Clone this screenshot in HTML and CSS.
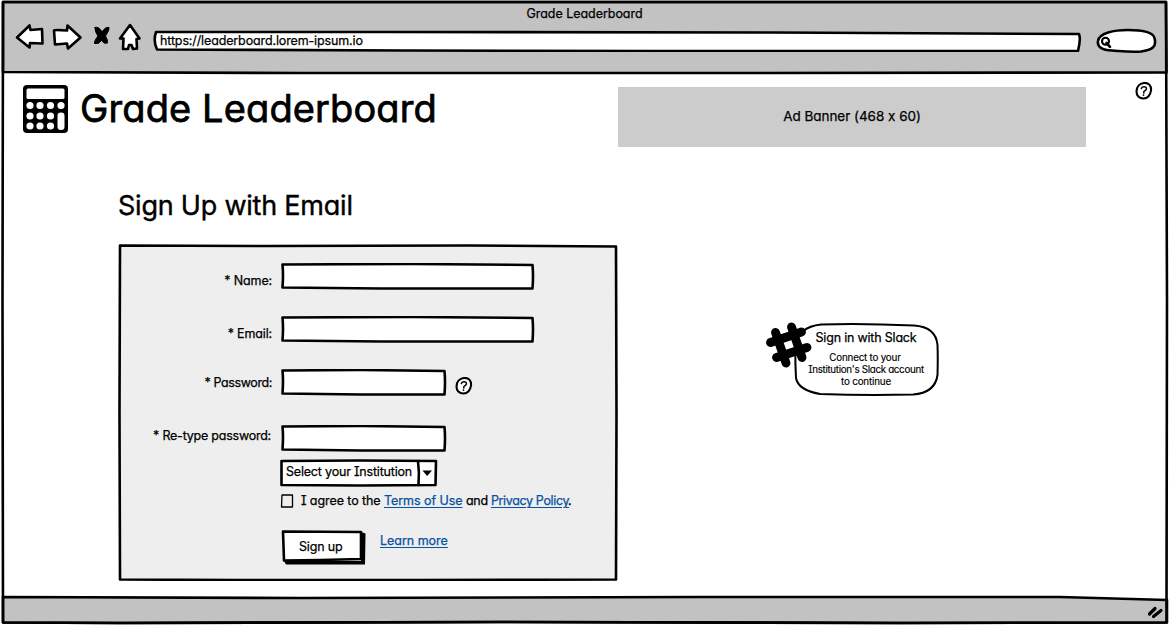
FILE: index.html
```html
<!DOCTYPE html>
<html lang="en">
<head>
<meta charset="utf-8">
<title>Grade Leaderboard</title>
<link rel="stylesheet" href="styles.css">
</head>
<body>
<div class="window">
  <svg class="frame ink" viewBox="0 0 1169 625">
    <path class="chrome" d="M3 2L1166 2L1166.500 72.500L700 73L300 73L3 72Z"/>
    <path class="chrome" d="M3 597L300 598L700 597L1060 597L1167 600L1167 622.500L900 623L500 622L120 623L3 622.500Z"/>
    <path d="M3 2L1166 2L1167 300L1166.500 622.500L900 623L500 622L120 623L3 622.500L2.500 300Z"/>
  </svg>

  <header class="header">
    <div class="titlebar"><span class="t-title">Grade Leaderboard</span></div>
    <div class="toolbar">
      <svg class="nav-icons ink" width="128" height="30" viewBox="15 22 128 30">
        <path class="paper" d="M17 37.500L29.500 25.500L30.500 30L42 29L42.500 43.500L30 43L29.500 47.500Z"/>
        <path class="paper" d="M54 30.500Q55 29.500 67 30.500L67.500 25.500L80.500 37.500L68 48.500L67 43.500L55 44.500Z"/>
        <path class="solid" d="M95 27.500Q99 26 102 32Q105.500 26.500 109 27.500Q109.500 30 105.500 36Q108 40 107.500 43Q104.500 44.500 101.500 40.500Q98 45 94.500 43.500Q94 41 98 36Q94.500 31.500 95 27.500Z"/>
        <path class="paper" d="M130 25L139.500 38.500L136.500 39L137 48.500L133 49L131.500 45L129 45L128 49L123 49L123.500 38.500L120 38.500Z"/>
      </svg>
      <div class="address">
        <svg class="sketch ink" viewBox="0 0 929 22">
          <path class="paper" d="M3 2L240 2L620 2.500L926 4Q928 9 925 21L500 21L250 20.500L4 19.500Q0 11 3 2Z"/>
        </svg>
        <span class="t-url">https://leaderboard.lorem-ipsum.io</span>
      </div>
      <svg class="search ink" width="62" height="28" viewBox="1096 27 62 28">
        <path class="paper" d="M1098 41C1099 33 1114 30 1128 30C1144 30 1153 32 1154.500 38C1157 47 1152 50 1141 51.500C1131 52.500 1120 51 1112 50.500C1102 50 1097 47 1098 41Z"/>
        <circle class="ring" cx="1105.500" cy="41.300" r="3.500"/><path d="M1106.500 43L1110 46.800"/>
      </svg>
    </div>
  </header>

  <main class="content">
    <section class="top">
      <svg class="logo" width="46" height="48" viewBox="0 0 46 48">
        <rect width="45" height="48" rx="4"/>
        <g class="holes">
          <rect x="3.500" y="3.500" width="38" height="10.500" rx="1.500"/>
          <circle cx="7" cy="20.500" r="3.600"/><circle cx="17" cy="20.500" r="3.600"/><circle cx="27.500" cy="20.500" r="3.600"/><circle cx="38" cy="20.500" r="3.600"/>
          <circle cx="7" cy="31" r="3.600"/><circle cx="17" cy="31" r="3.600"/><circle cx="27.500" cy="31" r="3.600"/>
          <circle cx="7" cy="41" r="3.600"/><circle cx="17" cy="41" r="3.600"/><circle cx="27.500" cy="41" r="3.600"/>
          <rect x="34.500" y="27.500" width="7" height="17.500" rx="3.300"/>
        </g>
      </svg>
      <h1 class="t-h1">Grade Leaderboard</h1>
      <div class="ad"><span class="t-ad">Ad Banner (468 x 60)</span></div>
      <svg class="help ink" width="18" height="18" viewBox="0 0 18 18"><path class="paper ring" d="M9 1C14 .5 16.500 4 16 8.500C15.500 13 12.500 16.500 8.500 16.500C4 16.500 1.500 13.500 1.500 9.500C1.500 5 4.500 1.500 9 1Z"/><path class="thin" d="M6.300 6.500Q7 4.700 9 4.700Q11.700 4.700 11.400 7Q11 8.300 9 9.400L8.700 11"/><circle class="dot" cx="8.500" cy="13.100" r=".9"/></svg>
    </section>

    <h2 class="t-h2">Sign Up with Email</h2>

    <section class="columns">
      <form class="form">
        <svg class="sketch ink" viewBox="0 0 500 337">
          <path class="panel" d="M2 1.500L150 2L350 1.500L498 2.500L498.500 170L498 335.500L300 336L120 336L2 335.500L1.500 170Z"/>
        </svg>
        <div class="row name">
          <label class="label t-name">* Name:</label>
          <div class="input wide"><svg class="sketch ink" viewBox="0 0 254 27"><path class="paper" d="M1.500 1.500L130 1L251.500 2Q252.500 13 251.500 25.500L100 25.500L1.500 24.500Q2.500 12 1.500 1.500Z"/></svg></div>
        </div>
        <div class="row email">
          <label class="label t-email">* Email:</label>
          <div class="input wide"><svg class="sketch ink" viewBox="0 0 254 27"><path class="paper" d="M1.500 1.500L130 1L251.500 2Q252.500 13 251.500 25.500L100 25.500L1.500 24.500Q2.500 12 1.500 1.500Z"/></svg></div>
        </div>
        <div class="row password">
          <label class="label t-pass">* Password:</label>
          <div class="input"><svg class="sketch ink" viewBox="0 0 166 27"><path class="paper" d="M1.500 1.500L80 1L163.500 2Q164.500 13 163.500 25.500L80 25.500L1.500 24.500Q2.500 12 1.500 1.500Z"/></svg></div>
          <svg class="help ink" width="18" height="18" viewBox="0 0 18 18"><path class="paper ring" d="M9 1C14 .5 16.500 4 16 8.500C15.500 13 12.500 16.500 8.500 16.500C4 16.500 1.500 13.500 1.500 9.500C1.500 5 4.500 1.500 9 1Z"/><path class="thin" d="M6.300 6.500Q7 4.700 9 4.700Q11.700 4.700 11.400 7Q11 8.300 9 9.400L8.700 11"/><circle class="dot" cx="8.500" cy="13.100" r=".9"/></svg>
        </div>
        <div class="row retype">
          <label class="label t-retype">* Re-type password:</label>
          <div class="input"><svg class="sketch ink" viewBox="0 0 166 27"><path class="paper" d="M1.500 1.500L80 1L163.500 2Q164.500 13 163.500 25.500L80 25.500L1.500 24.500Q2.500 12 1.500 1.500Z"/></svg></div>
        </div>
        <div class="select">
          <svg class="sketch ink" viewBox="0 0 158 28"><path class="paper" d="M1.500 2L80 1.500L156 2L155.500 26L80 26.500L1.500 26Z"/><path d="M138 2Q139.500 13 138.500 26"/><path class="dot" d="M142.500 11.500L152 11.500L147.200 17Z"/></svg>
          <span class="t-select">Select your Institution</span>
        </div>
        <div class="agree">
          <svg class="ink" width="14" height="14" viewBox="0 0 14 14"><path class="box" d="M2 1L12.500 1L12.500 13L1.500 13Z"/></svg>
          <span class="t-agree">I agree to the</span>
          <a class="t-terms">Terms of Use</a>
          <span class="t-and">and</span>
          <a class="t-privacy">Privacy Policy</a><span class="stop">.</span>
        </div>
        <div class="actions">
          <div class="button">
            <svg class="sketch ink" viewBox="0 0 85 35"><path class="dot" d="M3 31L80 31L80 2L84.500 3.500L84 34.500L5 34.500Z"/><path class="paper" d="M2 1.500L80 2L80 29L40 30L3 30.500Z"/></svg>
            <span class="t-signup">Sign up</span>
          </div>
          <a class="t-learn">Learn more</a>
        </div>
      </form>

      <div class="slack">
        <svg class="sketch" viewBox="765 320 176 78">
          <path class="bubble" d="M821 324.500Q860 323 914 325.500Q936 327 937.500 345Q938 358 937.500 375Q935 393 913 394.500Q865 395.500 820 394Q798 390 796 378Q795 363 795.500 346Q798 327 821 324.500Z"/>
          <path class="hash" d="M775.500 332.500L786 363M791.500 327L802 357.500M770.500 342.500L801.500 332M776.500 357.500L807 347.500"/>
        </svg>
        <span class="t-slack">Sign in with Slack</span>
        <span class="small t-s1">Connect to your</span>
        <span class="small t-s2">Institution's Slack account</span>
        <span class="small t-s3">to continue</span>
      </div>
    </section>
  </main>

  <footer class="footer">
    <svg width="20" height="16" viewBox="1146 604 20 16"><path class="grip" d="M1149.500 614L1155 608.500M1153.500 616.500L1161 610.500"/></svg>
  </footer>
</div>
</body>
</html>
```

FILE: styles.css
```css
* { box-sizing: border-box; }

body {
  margin: 0;
  background: #fff;
  color: #000;
  font: 12.5px/16px Inter, "Liberation Sans", sans-serif;
  font-feature-settings: "cv11", "cv08", "calt" 0;
  -webkit-text-stroke: .25px currentColor;
}

.window {
  position: relative;
  display: flex;
  flex-direction: column;
  width: 1169px;
  height: 625px;
  overflow: hidden;
}

.frame, .sketch {
  position: absolute;
  inset: 0;
  width: 100%;
  height: 100%;
  z-index: -1;
}

.window, .address, .form, .input, .select, .button, .slack { isolation: isolate; }
.address, .form, .input, .select, .button, .slack { position: relative; }

svg { display: block; flex: none; }
.ink { fill: none; stroke: #000; stroke-width: 2.6px; stroke-linejoin: round; stroke-linecap: round; }
.chrome { fill: #c2c2c2; }
.paper { fill: #fff; }
.panel { fill: #eee; }
.solid { fill: #000; stroke-width: 1px; }
.dot { fill: #000; stroke: none; }
.ring { stroke-width: 2.1px; }
.thin { stroke-width: 1.5px; }
.box { stroke-width: 1.3px; fill: #eee; }
.holes { fill: #fff; }
.bubble { fill: #fff; stroke: #000; stroke-width: 2px; }
.hash { fill: none; stroke: #000; stroke-width: 8.8px; stroke-linecap: round; }
.grip { fill: none; stroke: #000; stroke-width: 3.2px; stroke-linecap: round; }

span, a, label, h1, h2 { white-space: nowrap; }

.header { height: 73px; }
.titlebar { height: 22px; padding-top: 6px; text-align: center; }
.t-title { letter-spacing: -.04px; }
.toolbar { display: flex; padding-left: 15px; }
.address { width: 929px; height: 22px; margin: 8px 14px 0 10px; padding: 3px 0 0 7px; }
.t-url { letter-spacing: -.13px; }
.search { margin-top: 5px; }

.content { flex: 1; }
.top { display: flex; height: 74px; padding-left: 23px; align-items: flex-start; }
.logo { margin-top: 12px; }
h1, h2 { margin: 0; font-weight: 400; }
.t-h1 { width: 549px; padding-left: 11px; margin-top: 12px; font-size: 38px; line-height: 46px; letter-spacing: .12px; -webkit-text-stroke: .75px #000; }
.ad { display: flex; justify-content: center; align-items: center; width: 468px; height: 60px; margin-top: 14px; padding-bottom: 2px; background: #ccc; font-size: 13.5px; }
.t-ad { letter-spacing: -.03px; }
.top .help { margin: 9px 0 0 49px; }

.t-h2 { height: 97px; padding: 43px 0 0 118px; font-size: 27px; line-height: 32px; letter-spacing: -.22px; -webkit-text-stroke: .4px #000; }

.columns { display: flex; align-items: flex-start; padding-left: 118px; }
.form { width: 500px; height: 337px; padding-top: 19px; }
.row { display: flex; height: 53px; align-items: flex-start; }
.row.password { height: 56px; }
.row.retype { height: 34px; }
.label { width: 154px; margin-right: 9px; padding-top: 10px; text-align: right; }
.t-name, .t-email { letter-spacing: -.15px; }
.t-pass { letter-spacing: -.38px; }
.t-retype { padding-right: 1px; letter-spacing: -.23px; }
.password .label { padding-top: 6px; }
.retype .label { padding-top: 3px; }
.input { width: 166px; height: 27px; }
.input.wide { width: 254px; }
.password .help { margin: 8px 0 0 8px; }
.select { width: 158px; height: 28px; margin-left: 162px; padding: 5px 0 0 6px; }
.t-select { letter-spacing: -.19px; }
.agree { display: flex; height: 43px; padding: 6px 0 0 162px; }
.agree svg { margin: 1px 7px 0 0; }
.agree span, .agree a { flex: none; }
.t-agree { width: 83px; letter-spacing: -.08px; }
.t-terms { margin-right: 3.5px; letter-spacing: -.06px; }
.t-and { width: 25px; letter-spacing: -.25px; }
.t-privacy { letter-spacing: -.36px; }
.stop { margin-left: -1px; }
a { color: #08519f; text-decoration: underline; text-decoration-thickness: 1px; text-underline-offset: 2px; }
.actions { display: flex; padding-left: 163px; }
.button { width: 85px; height: 35px; padding: 9px 0 0 18px; }
.t-signup { letter-spacing: -.15px; }
.t-learn { margin: 3px 0 0 14px; letter-spacing: -.02px; }

.slack { display: flex; flex-direction: column; align-items: center; width: 176px; height: 78px; margin: 76px 0 0 147px; padding: 10px 0 0 26px; }
.t-slack { letter-spacing: -.2px; }
.small { font-size: 9.8px; line-height: 12px; -webkit-text-stroke-width: .15px; }
.t-s1 { margin: 6px 2px 0 0; letter-spacing: -.2px; }
.t-s2 { letter-spacing: -.32px; }
.t-s3 { letter-spacing: -.18px; }

.footer { display: flex; justify-content: flex-end; height: 27px; padding: 6px 3px 0 0; }
```
